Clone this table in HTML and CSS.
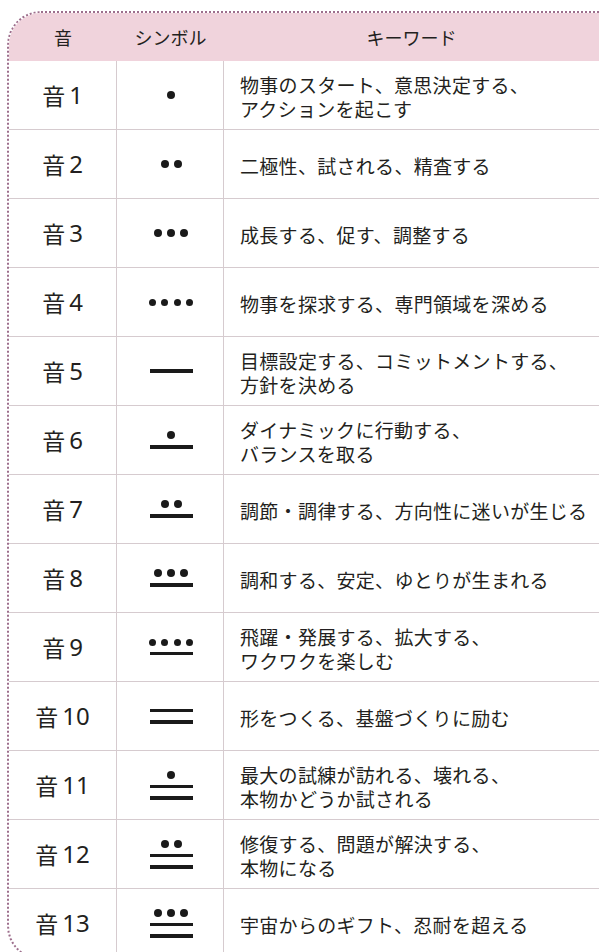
FILE: index.html
```html
<!DOCTYPE html>
<html lang="ja">
<head>
<meta charset="utf-8">
<title>音とシンボル</title>
<link rel="stylesheet" href="styles.css">
</head>
<body>
<div class="page">
  <div class="table">
    <div class="head">
      <div class="hc">音</div>
      <div class="hc">シンボル</div>
      <div class="hc">キーワード</div>
    </div>

    <div class="row">
      <div class="c tone">音<span class="num">1</span></div>
      <div class="c sym"><div class="dots"><i></i></div></div>
      <div class="c kw">物事のスタート、意思決定する、<br>アクションを起こす</div>
    </div>
    <div class="row">
      <div class="c tone">音<span class="num">2</span></div>
      <div class="c sym"><div class="dots"><i></i><i></i></div></div>
      <div class="c kw">二極性、試される、精査する</div>
    </div>
    <div class="row">
      <div class="c tone">音<span class="num">3</span></div>
      <div class="c sym"><div class="dots"><i></i><i></i><i></i></div></div>
      <div class="c kw">成長する、促す、調整する</div>
    </div>
    <div class="row">
      <div class="c tone">音<span class="num">4</span></div>
      <div class="c sym"><div class="dots four"><i></i><i></i><i></i><i></i></div></div>
      <div class="c kw">物事を探求する、専門領域を深める</div>
    </div>
    <div class="row">
      <div class="c tone">音<span class="num">5</span></div>
      <div class="c sym"><div class="bar"></div></div>
      <div class="c kw">目標設定する、コミットメントする、<br>方針を決める</div>
    </div>
    <div class="row">
      <div class="c tone">音<span class="num">6</span></div>
      <div class="c sym"><div class="dots"><i></i></div><div class="bar"></div></div>
      <div class="c kw">ダイナミックに行動する、<br>バランスを取る</div>
    </div>
    <div class="row">
      <div class="c tone">音<span class="num">7</span></div>
      <div class="c sym"><div class="dots"><i></i><i></i></div><div class="bar"></div></div>
      <div class="c kw">調節・調律する、方向性に迷いが生じる</div>
    </div>
    <div class="row">
      <div class="c tone">音<span class="num">8</span></div>
      <div class="c sym"><div class="dots"><i></i><i></i><i></i></div><div class="bar"></div></div>
      <div class="c kw">調和する、安定、ゆとりが生まれる</div>
    </div>
    <div class="row">
      <div class="c tone">音<span class="num">9</span></div>
      <div class="c sym"><div class="dots four"><i></i><i></i><i></i><i></i></div><div class="bar"></div></div>
      <div class="c kw">飛躍・発展する、拡大する、<br>ワクワクを楽しむ</div>
    </div>
    <div class="row">
      <div class="c tone">音<span class="num">10</span></div>
      <div class="c sym"><div class="bars"><div class="bar"></div><div class="bar"></div></div></div>
      <div class="c kw">形をつくる、基盤づくりに励む</div>
    </div>
    <div class="row">
      <div class="c tone">音<span class="num">11</span></div>
      <div class="c sym"><div class="dots"><i></i></div><div class="bars"><div class="bar"></div><div class="bar"></div></div></div>
      <div class="c kw">最大の試練が訪れる、壊れる、<br>本物かどうか試される</div>
    </div>
    <div class="row">
      <div class="c tone">音<span class="num">12</span></div>
      <div class="c sym"><div class="dots"><i></i><i></i></div><div class="bars"><div class="bar"></div><div class="bar"></div></div></div>
      <div class="c kw">修復する、問題が解決する、<br>本物になる</div>
    </div>
    <div class="row">
      <div class="c tone">音<span class="num">13</span></div>
      <div class="c sym"><div class="dots"><i></i><i></i><i></i></div><div class="bars"><div class="bar"></div><div class="bar"></div></div></div>
      <div class="c kw">宇宙からのギフト、忍耐を超える</div>
    </div>
  </div>
</div>
</body>
</html>
```

FILE: styles.css
```css
html, body {
  margin: 0;
  padding: 0;
  background: #ffffff;
  overflow: hidden;
}

body {
  font-family: "Noto Sans CJK JP", "Noto Sans", sans-serif;
  color: #231f20;
}

.page {
  padding: 11px 0 0 7px;
}

.table {
  border: 2px dotted #9d6e8c;
  border-right: none;
  border-radius: 34px 0 0 34px;
  overflow: hidden;
  background: #ffffff;
}

.head {
  display: grid;
  grid-template-columns: 108px 107px 1fr;
  height: 48px;
  background: #f0d3dc;
  align-items: center;
}

.hc {
  text-align: center;
  font-size: 18px;
  line-height: 24px;
}

.row {
  display: grid;
  grid-template-columns: 108px 107px 1fr;
  height: 69px;
  box-sizing: border-box;
  border-bottom: 1.5px solid #d6cbcf;
}

.c {
  display: flex;
  align-items: center;
  box-sizing: border-box;
  min-width: 0;
}

.tone,
.sym {
  border-right: 1.5px solid #d6cbcf;
  justify-content: center;
}

.tone {
  font-size: 23px;
  line-height: 28px;
}

.num {
  margin-left: 4px;
  font-family: "Noto Sans", "Liberation Sans", sans-serif;
  font-size: 24px;
}

.sym {
  flex-direction: column;
  gap: 6px;
  padding-left: 2px;
}

.dots {
  display: flex;
  gap: 5px;
}

.dots i {
  display: block;
  width: 8px;
  height: 8px;
  border-radius: 50%;
  background: #1a1a1a;
}

.dots.four {
  gap: 5.5px;
}

.dots.four i {
  width: 7px;
  height: 7px;
}

.bars {
  display: flex;
  flex-direction: column;
  gap: 8px;
}

.bar {
  width: 43px;
  height: 3.5px;
  background: #1a1a1a;
}

.kw {
  padding: 3px 0 0 16px;
  font-size: 19px;
  line-height: 24px;
  letter-spacing: 0.3px;
  white-space: nowrap;
  overflow: hidden;
}
```
